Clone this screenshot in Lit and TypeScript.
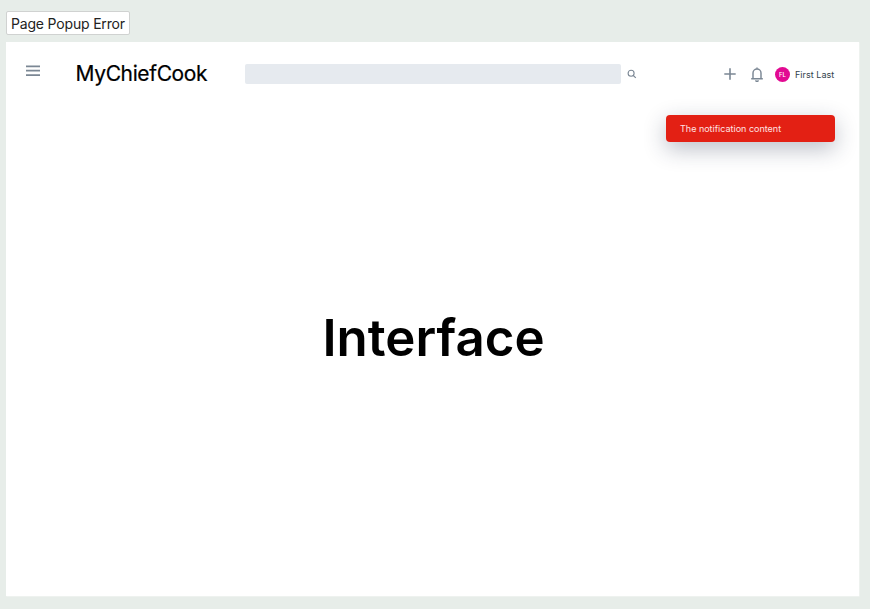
import { LitElement, html, css } from "lit";
import { customElement } from "lit/decorators.js";

@customElement("app-root")
export class AppRoot extends LitElement {
  static styles = css`
    :host {
      display: flex;
      flex-direction: column;
      align-items: flex-start;
      box-sizing: border-box;
      width: 870px;
      height: 609px;
      padding: 11px 10.5px 13px 6px;
      gap: 7px;
      overflow: hidden;
      background: #e7ede9;
      font-family: Inter, "Liberation Sans", sans-serif;
      color: #000;
    }
    * { box-sizing: border-box; }
    svg { display: block; flex: none; fill: none; stroke: #7b8794; }
    .label {
      height: 24px;
      width: 124px;
      padding-left: 4px;
      border: 1px solid #d0d2d1;
      border-radius: 2px;
      background: #fff;
      color: #222;
      font-size: 14px;
      letter-spacing: -0.18px;
      line-height: 23px;
      white-space: nowrap;
    }
    .page {
      position: relative;
      display: flex;
      flex-direction: column;
      width: 853px;
      flex: 1;
      min-height: 0;
      background: #fff;
      box-shadow: 0.5px 0.5px 0 #f5f8f6;
    }
    .bar {
      display: flex;
      align-items: center;
      height: 64px;
      padding: 0 24.5px 0 20px;
      white-space: nowrap;
    }
    .menu { margin-top: -7px; }
    .brand { width: 169px; margin-left: 35.5px; font-size: 21px; letter-spacing: -0.37px; line-height: 28px; -webkit-text-stroke: 0.2px #000; }
    .search { width: 376px; height: 20px; border-radius: 2px; background: #e6eaef; }
    .find { margin-left: 6px; }
    .plus { margin-left: auto; }
    .bell { margin-left: 14px; }
    .avatar {
      width: 15px;
      height: 15px;
      margin-left: 11px;
      border-radius: 50%;
      background: #e20a92;
      color: #fff;
      font-size: 6px;
      font-weight: 500;
      line-height: 15px;
      text-align: center;
    }
    .user { width: 39.5px; margin-left: 5px; color: #323f4b; font-size: 9px; letter-spacing: 0.04px; line-height: 14px; padding-top: 1px; }
    .content { flex: 1; display: flex; justify-content: center; padding: 200px 0 0 2px; }
    .title { margin: 0; font-size: 51px; font-weight: 600; line-height: 64px; }
    .notice {
      position: absolute;
      top: 73.4px;
      right: 24px;
      width: 169px;
      height: 26.2px;
      padding-left: 14px;
      border-radius: 4px;
      background: #e32014;
      color: #ffe3e3;
      font-size: 9px;
      line-height: 27px;
      box-shadow: 0 7px 22px rgba(31, 41, 70, 0.3);
    }
  `;

  render() {
    return html`
      <div class="label">Page Popup Error</div>
      <main class="page">
        <header class="bar">
          <svg class="menu" width="14" height="12" viewBox="0 0 14 12" stroke-width="1.75">
            <path d="M0 1.3H14M0 5.7H14M0 10.1H14" />
          </svg>
          <div class="brand">MyChiefCook</div>
          <div class="search"></div>
          <svg class="find" width="10" height="10" viewBox="0 0 10 10" stroke-width="1.1">
            <circle cx="4.1" cy="4.3" r="3" /><path d="M6.3 6.5L8.8 8.8" />
          </svg>
          <svg class="plus" width="12" height="12" viewBox="0 0 12 12" stroke-width="1.6">
            <path d="M.3 6H11.7M6 .3V11.7" />
          </svg>
          <svg class="bell" width="14" height="15" viewBox="0 0 14 15" stroke-width="1.45">
            <path d="M1.2 11.7H12.8M3 11.4V6A4 4 0 0 1 11 6V11.4M7 2V.6M5.8 13.2A1.2 1.2 0 0 0 8.2 13.2" />
          </svg>
          <div class="avatar">FL</div>
          <div class="user">First Last</div>
        </header>
        <section class="content"><h1 class="title">Interface</h1></section>
        <div class="notice" role="alert">The notification content</div>
      </main>
    `;
  }
}
